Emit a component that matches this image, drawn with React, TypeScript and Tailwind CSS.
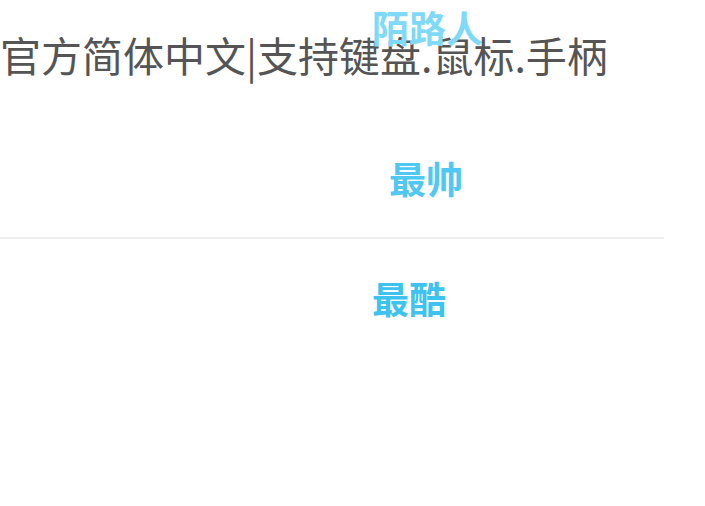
import React from "react";

export default function App() {
  const cjk = { fontFamily: '"Noto Sans CJK SC", "Noto Sans", sans-serif' };
  return (
    <div className="relative w-[705px] h-[506px] bg-white overflow-hidden" style={cjk}>
      <div className="pt-[30px] pl-0 text-[41px] leading-[48px] text-[#555555] whitespace-nowrap">
        官方简体中文|支持键盘.鼠标.手柄
      </div>
      <div className="absolute left-[372px] top-[4px] text-[37px] leading-[46px] font-bold text-[#7fd9f8] whitespace-nowrap">
        陌路人
      </div>
      <div className="mt-[78px] h-[44px] pl-[389px] text-[37px] leading-[44px] font-bold text-[#4fc8f2] whitespace-nowrap">
        最帅
      </div>
      <div className="mt-[37px] w-[664px] h-[2px] bg-[#eeeeee]" />
      <div className="mt-[37px] h-[44px] pl-[372px] text-[37px] leading-[44px] font-bold text-[#3ec3ee] whitespace-nowrap">
        最酷
      </div>
    </div>
  );
}
